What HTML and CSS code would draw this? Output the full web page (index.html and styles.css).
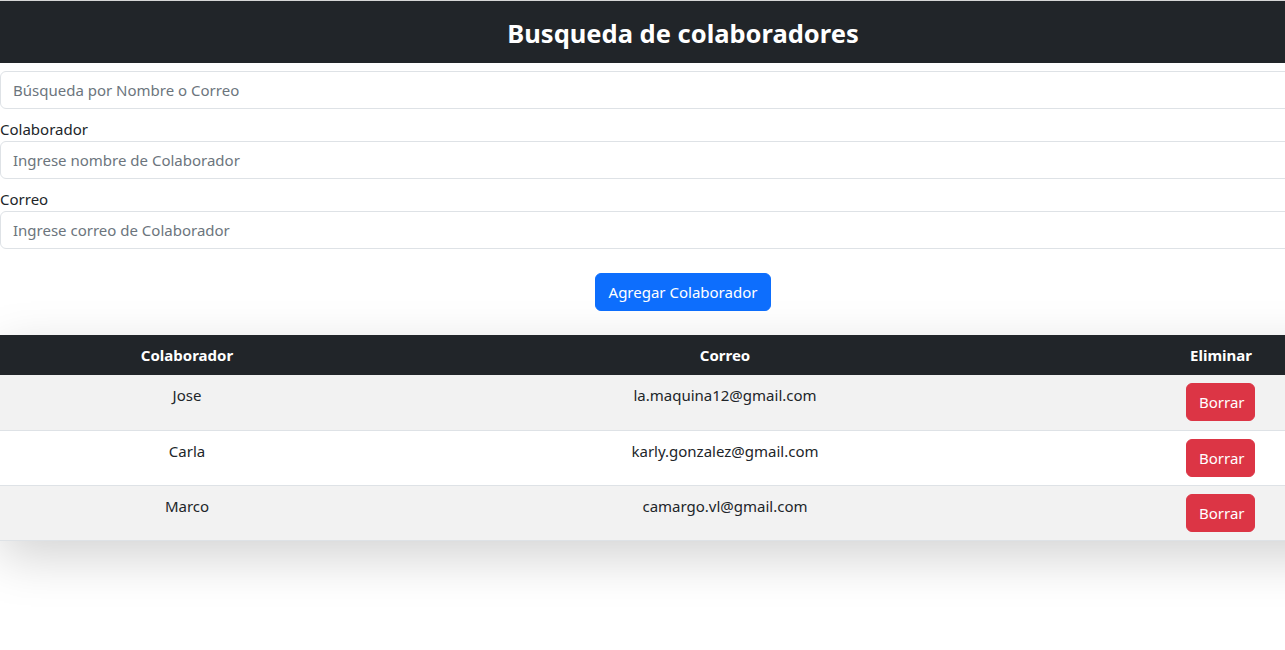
FILE: index.html
```html
<!DOCTYPE html>
<html lang="es">
<head>
<meta charset="utf-8">
<title>Busqueda de colaboradores</title>
<link rel="stylesheet" href="styles.css">
</head>
<body>
<div class="page">
  <header class="topbar">
    <h1 class="title">Busqueda de colaboradores</h1>
  </header>
  <div class="form">
    <input class="field" type="text" placeholder="Búsqueda por Nombre o Correo">
    <label class="label">Colaborador</label>
    <input class="field" type="text" placeholder="Ingrese nombre de Colaborador">
    <label class="label">Correo</label>
    <input class="field" type="text" placeholder="Ingrese correo de Colaborador">
    <div class="actions">
      <button class="btn btn-primary">Agregar Colaborador</button>
    </div>
  </div>
  <div class="table-wrap">
    <table class="grid">
      <colgroup>
        <col class="c1"><col class="c2"><col class="c3">
      </colgroup>
      <thead>
        <tr><th>Colaborador</th><th>Correo</th><th>Eliminar</th></tr>
      </thead>
      <tbody>
        <tr class="odd"><td>Jose</td><td>la.maquina12@gmail.com</td><td><button class="btn btn-danger">Borrar</button></td></tr>
        <tr><td>Carla</td><td>karly.gonzalez@gmail.com</td><td><button class="btn btn-danger">Borrar</button></td></tr>
        <tr class="odd"><td>Marco</td><td>camargo.vl@gmail.com</td><td><button class="btn btn-danger">Borrar</button></td></tr>
      </tbody>
    </table>
  </div>
</div>
</body>
</html>
```
FILE: styles.css
```css
html {
  overflow: hidden;
  background: #fff;
}
body {
  margin: 0;
  padding: 0;
  min-height: 650px;
  font-family: "Noto Sans", "Open Sans", Arial, sans-serif;
  font-size: 15px;
  line-height: 24px;
  color: #212529;
  border-top: 1px solid #d6d6d6;
}
.page {
  width: 1366px;
}
.topbar {
  background: #212529;
  height: 62px;
  display: flex;
  align-items: center;
  justify-content: center;
}
.title {
  margin: 0;
  color: #fff;
  font-size: 25.5px;
  font-weight: 700;
  line-height: 32px;
  padding-top: 2px;
}
.form {
  display: flex;
  flex-direction: column;
  padding-top: 8px;
}
.field {
  box-sizing: border-box;
  height: 38px;
  width: 100%;
  border: 1px solid #dee2e6;
  border-radius: 6px;
  padding: 6px 12px;
  font: inherit;
  color: #212529;
  outline: none;
}
.field::placeholder {
  color: #6c757d;
}
.label {
  margin-top: 8px;
  line-height: 24px;
  height: 24px;
  display: block;
}
.actions {
  display: flex;
  justify-content: center;
  padding: 24px 0 24px;
}
.btn {
  border: 1px solid transparent;
  border-radius: 6px;
  height: 38px;
  padding: 0 12px;
  font: inherit;
  color: #fff;
  cursor: pointer;
}
.btn-primary {
  background: #0d6efd;
  border-color: #0d6efd;
  width: 176px;
}
.btn-danger {
  background: #dc3545;
  border-color: #dc3545;
  width: 69px;
}
.table-wrap {
  width: 1366px;
  box-shadow: 0 16px 48px rgba(0, 0, 0, 0.175);
}
.grid {
  width: 1366px;
  border-collapse: collapse;
  table-layout: fixed;
}
.c1 { width: 374px; }
.c2 { width: 702px; }
.c3 { width: 290px; }
.grid th {
  background: #212529;
  color: #fff;
  font-weight: 700;
  height: 40px;
  padding: 0 8px;
  text-align: center;
}
.grid td {
  box-sizing: border-box;
  padding: 8px 8px 0;
  height: 55px;
  vertical-align: top;
  text-align: center;
  border-bottom: 1px solid #dee2e6;
}
.grid td:last-child {
  padding: 8px 8px 0;
  text-align: left;
}
.grid td:last-child .btn {
  margin-left: 102px;
  display: block;
}
.grid tr.odd td {
  background: #f2f2f2;
}
```
